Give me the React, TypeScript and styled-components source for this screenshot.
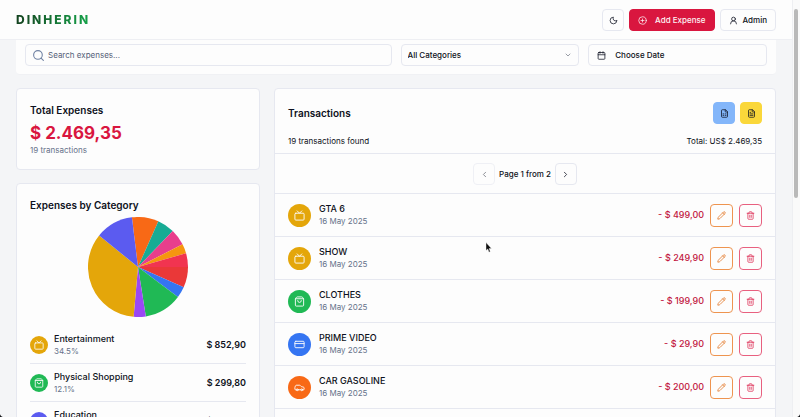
import React from "react";
import styled, { createGlobalStyle } from "styled-components";
import {
  Calendar,
  Car,
  ChevronDown,
  ChevronLeft,
  ChevronRight,
  CirclePlus,
  CreditCard,
  FileSpreadsheet,
  FileText,
  GraduationCap,
  Moon,
  Pencil,
  Search,
  ShoppingBag,
  Trash2,
  Tv,
  UserRound,
} from "lucide-react";
import type { LucideIcon } from "lucide-react";

const color = {
  ink: "#0d1120",
  muted: "#66728a",
  line: "#e6e8f0",
  card: "#fdfdfd",
  page: "#f4f5f7",
  red: "#d9163f",
  yellow: "#e4a60a",
  green: "#20b955",
  indigo: "#5b5bf0",
  blue: "#3575f2",
  orange: "#f86916",
};

const GlobalStyle = createGlobalStyle`
  *, *::before, *::after { box-sizing: border-box; }
  html, body { margin: 0; overflow: hidden; }
  body {
    background: ${color.page};
    color: ${color.ink};
    font-family: Inter, "Liberation Sans", sans-serif;
    font-size: 8px;
    line-height: 12px;
  }
  h1, h2, p, ul { margin: 0; padding: 0; }
  ul { list-style: none; }
  button, input, select { font: inherit; color: inherit; }
`;

const Shell = styled.div`
  display: grid;
  grid-template-columns: 1fr 8px;
  height: 100vh;
  overflow: hidden;
`;

const Page = styled.div`
  display: flex;
  flex-direction: column;
  min-width: 0;
  min-height: 0;
  overflow: hidden;
`;

const TopBar = styled.header`
  display: flex;
  flex: none;
  align-items: center;
  justify-content: space-between;
  padding: 9px 16px 8px;
  background: ${color.card};
  border-bottom: 1px solid #eeeff3;
`;

const Brand = styled.a`
  font-size: 12px;
  font-weight: 800;
  line-height: 16px;
  letter-spacing: 2px;
  text-decoration: none;
  color: transparent;
  background: linear-gradient(90deg, #14421f, #16a34a);
  background-clip: text;
`;

const Actions = styled.div<{ $gap: number }>`
  display: flex;
  align-items: center;
  gap: ${(p) => p.$gap}px;
`;

const Button = styled.button<{ $primary?: boolean; $gap?: number }>`
  display: inline-flex;
  align-items: center;
  justify-content: center;
  gap: ${(p) => p.$gap ?? 5}px;
  height: 22px;
  padding: 0 8px;
  font-weight: 500;
  border: 1px solid ${(p) => (p.$primary ? color.red : color.line)};
  border-radius: 4px;
  background: ${(p) => (p.$primary ? color.red : color.card)};
  color: ${(p) => (p.$primary ? "#fdf3f5" : color.ink)};
`;

const IconButton = styled.button<{ $tone?: string; $fill?: string; $line?: string; $size?: number }>`
  display: inline-flex;
  align-items: center;
  justify-content: center;
  width: ${(p) => p.$size ?? 22}px;
  height: ${(p) => p.$size ?? 22}px;
  padding: 0;
  border: 1px solid ${(p) => p.$line ?? color.line};
  border-radius: 4px;
  background: ${(p) => p.$fill ?? color.card};
  color: ${(p) => p.$tone ?? color.ink};
  &:disabled { opacity: 0.6; }
`;

const Content = styled.main`
  display: flex;
  flex-direction: column;
  gap: 13px;
  padding: 0 16px;
  min-height: 0;
`;

const Filters = styled.form`
  display: grid;
  flex: none;
  grid-template-columns: repeat(4, 1fr);
  gap: 9px;
  padding: 4px 9px 8px;
  background: ${color.card};
  border-bottom: 1px solid #f0f1f4;
  border-radius: 0 0 4px 4px;
`;

const SearchField = styled.label`
  display: flex;
  grid-column: span 2;
  align-items: center;
  gap: 3px;
  height: 22px;
  padding: 0 6px;
  border: 1px solid ${color.line};
  border-radius: 4px;
  color: #7082a3;
`;

const SearchInput = styled.input`
  flex: 1;
  min-width: 0;
  padding: 0;
  border: 0;
  outline: 0;
  background: transparent;
  &::placeholder { color: #556178; opacity: 1; }
`;

const SelectField = styled.label`
  display: grid;
  align-items: center;
  & > * { grid-area: 1 / 1; }
  & > svg { justify-self: end; margin-right: 7px; color: #666c7a; pointer-events: none; }
`;

const CategorySelect = styled.select`
  appearance: none;
  width: 100%;
  height: 22px;
  padding: 0 6px;
  font-weight: 500;
  border: 1px solid ${color.line};
  border-radius: 4px;
  background: ${color.card};
`;

const DateButton = styled.button`
  display: flex;
  align-items: center;
  gap: 9px;
  height: 22px;
  padding: 0 8px;
  font-weight: 500;
  border: 1px solid ${color.line};
  border-radius: 4px;
  background: ${color.card};
`;

const Board = styled.div`
  display: grid;
  grid-template-columns: repeat(3, 1fr);
  gap: 14px;
  align-items: start;
`;

const SideColumn = styled.div`
  display: flex;
  flex-direction: column;
  gap: 13px;
`;

const Card = styled.section<{ $span?: number }>`
  grid-column: span ${(p) => p.$span ?? 1};
  background: ${color.card};
  border: 1px solid ${color.line};
  border-radius: 4px;
`;

const CardBody = styled.div`
  padding: 14px 13px 13px;
`;

const Title = styled.h2`
  font-size: 10px;
  font-weight: 600;
  line-height: 14px;
`;

const Total = styled.p`
  margin: 6px 0 1px;
  font-size: 17px;
  font-weight: 700;
  line-height: 20px;
  color: ${color.red};
`;

const Muted = styled.p`
  color: ${color.muted};
`;

const Chart = styled.svg`
  display: block;
  width: 100px;
  height: 100px;
  margin: 5px auto 9px;
`;

const CategoryRow = styled.li`
  display: flex;
  align-items: center;
  gap: 6px;
  height: 38px;
  border-bottom: 1px solid ${color.line};
`;

const Badge = styled.span<{ $color: string; $size: number }>`
  display: inline-flex;
  flex: none;
  align-items: center;
  justify-content: center;
  width: ${(p) => p.$size}px;
  height: ${(p) => p.$size}px;
  border-radius: 50%;
  background: ${(p) => p.$color};
  color: #fdfdfd;
`;

const Label = styled.div`
  flex: 1;
  min-width: 0;
`;

const Name = styled.p`
  font-size: 9px;
  font-weight: 500;
`;

const Amount = styled.span<{ $spent?: boolean }>`
  font-size: 9px;
  font-weight: ${(p) => (p.$spent ? 500 : 600)};
  color: ${(p) => (p.$spent ? "#c2183f" : color.ink)};
`;

const ListHead = styled.div`
  display: flex;
  flex-direction: column;
  gap: 11px;
  padding: 13px 13px 6px;
  border-bottom: 1px solid ${color.line};
`;

const Split = styled.div`
  display: flex;
  align-items: center;
  justify-content: space-between;
`;

const Pager = styled.nav`
  display: flex;
  align-items: center;
  justify-content: center;
  gap: 4px;
  padding: 9px 0 8px;
  font-weight: 500;
  border-bottom: 1px solid ${color.line};
`;

const TransactionRow = styled.li`
  display: flex;
  align-items: center;
  gap: 8px;
  height: 43px;
  padding: 0 13px;
  border-bottom: 1px solid ${color.line};
`;

const Track = styled.div`
  padding: 9px 2px 0 1px;
  background: #fafafa;
  border-left: 1px solid #eeeff2;
`;

const Thumb = styled.div`
  height: 189px;
  border-radius: 2px;
  background: #b9b9b9;
`;

const Pointer = styled.svg`
  position: fixed;
  left: 485px;
  top: 242px;
  width: 7px;
  height: 11px;
  pointer-events: none;
`;

const WindowCorner = styled.div<{ $side: "left" | "right" }>`
  position: fixed;
  bottom: 0;
  ${(p) => p.$side}: 0;
  width: 5px;
  height: 5px;
  background: radial-gradient(
    circle at top ${(p) => (p.$side === "left" ? "right" : "left")},
    transparent 5px,
    #15161a 6px
  );
  pointer-events: none;
`;

const slices: { from: number; to: number; fill: string }[] = [
  { from: 353, to: 384, fill: color.orange },
  { from: 24, to: 44, fill: "#17ab94" },
  { from: 44, to: 63, fill: "#e83e8c" },
  { from: 63, to: 74, fill: "#f5960f" },
  { from: 74, to: 91, fill: "#f13450" },
  { from: 90, to: 114, fill: "#ea3838" },
  { from: 114, to: 127, fill: color.blue },
  { from: 127, to: 171, fill: color.green },
  { from: 171, to: 185, fill: "#9a48f4" },
  { from: 185, to: 309, fill: color.yellow },
  { from: 309, to: 353, fill: color.indigo },
];

const point = (deg: number) => {
  const a = (deg * Math.PI) / 180;
  return `${(50 + 50 * Math.sin(a)).toFixed(2)} ${(50 - 50 * Math.cos(a)).toFixed(2)}`;
};

const categories: { name: string; share: string; amount: string; fill: string; icon: LucideIcon }[] = [
  { name: "Entertainment", share: "34.5%", amount: "$ 852,90", fill: color.yellow, icon: Tv },
  { name: "Physical Shopping", share: "12.1%", amount: "$ 299,80", fill: color.green, icon: ShoppingBag },
  { name: "Education", share: "12.1%", amount: "$ 299,00", fill: color.indigo, icon: GraduationCap },
];

const transactions: { name: string; amount: string; fill: string; icon: LucideIcon }[] = [
  { name: "GTA 6", amount: "499,00", fill: color.yellow, icon: Tv },
  { name: "SHOW", amount: "249,90", fill: color.yellow, icon: Tv },
  { name: "CLOTHES", amount: "199,90", fill: color.green, icon: ShoppingBag },
  { name: "PRIME VIDEO", amount: "29,90", fill: color.blue, icon: CreditCard },
  { name: "CAR GASOLINE", amount: "200,00", fill: color.orange, icon: Car },
];

export default function App() {
  return (
    <>
      <GlobalStyle />
      <Shell>
        <Page>
          <TopBar>
            <Brand href="#">DINHERIN</Brand>
            <Actions $gap={5}>
              <IconButton aria-label="Toggle theme">
                <Moon size={9} />
              </IconButton>
              <Button $primary $gap={8}>
                <CirclePlus size={9} />
                Add Expense
              </Button>
              <Button>
                <UserRound size={9} />
                Admin
              </Button>
            </Actions>
          </TopBar>
          <Content>
            <Filters>
              <SearchField>
                <Search size={13} />
                <SearchInput type="text" placeholder="Search expenses..." aria-label="Search expenses" />
              </SearchField>
              <SelectField>
                <CategorySelect aria-label="Category">
                  <option>All Categories</option>
                </CategorySelect>
                <ChevronDown size={8} />
              </SelectField>
              <DateButton type="button">
                <Calendar size={9} />
                Choose Date
              </DateButton>
            </Filters>
            <Board>
              <SideColumn>
                <Card>
                  <CardBody>
                    <Title>Total Expenses</Title>
                    <Total>$ 2.469,35</Total>
                    <Muted>19 transactions</Muted>
                  </CardBody>
                </Card>
                <Card>
                  <CardBody>
                    <Title>Expenses by Category</Title>
                    <Chart viewBox="0 0 100 100" role="img" aria-label="Expenses by category">
                      {slices.map((s) => (
                        <path
                          key={s.from}
                          fill={s.fill}
                          d={`M50 50L${point(s.from)}A50 50 0 0 1 ${point(s.to)}Z`}
                        />
                      ))}
                    </Chart>
                    <ul>
                      {categories.map(({ icon: Icon, ...c }) => (
                        <CategoryRow key={c.name}>
                          <Badge $color={c.fill} $size={18}>
                            <Icon size={10} />
                          </Badge>
                          <Label>
                            <Name>{c.name}</Name>
                            <Muted>{c.share}</Muted>
                          </Label>
                          <Amount>{c.amount}</Amount>
                        </CategoryRow>
                      ))}
                    </ul>
                  </CardBody>
                </Card>
              </SideColumn>
              <Card $span={2}>
                <ListHead>
                  <Split>
                    <Title>Transactions</Title>
                    <Actions $gap={5}>
                      <IconButton aria-label="Export spreadsheet" $fill="#83b6fa" $line="#83b6fa">
                        <FileSpreadsheet size={9} />
                      </IconButton>
                      <IconButton aria-label="Export report" $fill="#fad73a" $line="#fad73a">
                        <FileText size={9} />
                      </IconButton>
                    </Actions>
                  </Split>
                  <Split>
                    <span>19 transactions found</span>
                    <span>Total: US$ 2.469,35</span>
                  </Split>
                </ListHead>
                <Pager aria-label="Pages">
                  <IconButton aria-label="Previous page" disabled>
                    <ChevronLeft size={9} />
                  </IconButton>
                  <span>Page 1 from 2</span>
                  <IconButton aria-label="Next page">
                    <ChevronRight size={9} />
                  </IconButton>
                </Pager>
                <ul>
                  {transactions.map(({ icon: Icon, ...t }) => (
                    <TransactionRow key={t.name}>
                      <Badge $color={t.fill} $size={23}>
                        <Icon size={11} />
                      </Badge>
                      <Label>
                        <Name>{t.name}</Name>
                        <Muted>16 May 2025</Muted>
                      </Label>
                      <Actions $gap={6}>
                        <Amount $spent>- $ {t.amount}</Amount>
                        <IconButton aria-label={`Edit ${t.name}`} $size={23} $tone="#e2701c" $line="#ee9450">
                          <Pencil size={9} />
                        </IconButton>
                        <IconButton aria-label={`Delete ${t.name}`} $size={23} $tone="#dc2850" $line="#e8607f">
                          <Trash2 size={9} />
                        </IconButton>
                      </Actions>
                    </TransactionRow>
                  ))}
                  <TransactionRow />
                </ul>
              </Card>
            </Board>
          </Content>
        </Page>
        <Track>
          <Thumb />
        </Track>
      </Shell>
      <Pointer viewBox="0 0 7 11" aria-hidden="true">
        <path d="M1 0.5V8.5L2.8 7L4 10.2L5.3 9.6L4.1 6.6H6.5Z" fill="#111" stroke="#fff" strokeWidth="0.4" />
      </Pointer>
      <WindowCorner $side="left" />
      <WindowCorner $side="right" />
    </>
  );
}
